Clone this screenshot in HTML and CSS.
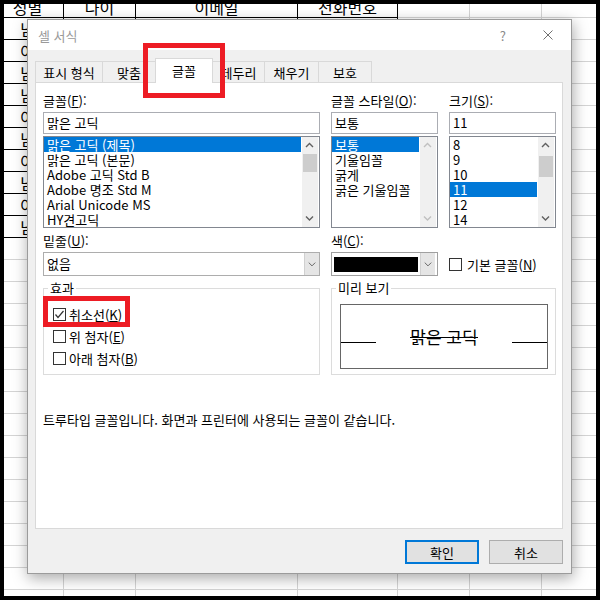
FILE: index.html
```html
<!DOCTYPE html>
<html lang="ko">
<head>
<meta charset="utf-8">
<title>셀 서식</title>
<link rel="stylesheet" href="styles.css">
</head>
<body>
<div class="frame">
  <table class="sheet">
    <colgroup><col class="c-a"><col class="c-b"><col class="c-c"><col class="c-d"></colgroup>
    <tr><td>성별</td><td>나이</td><td>이메일</td><td>전화번호</td></tr>
    <tr><td>남</td><td></td><td></td><td></td></tr>
    <tr><td>여</td><td></td><td></td><td></td></tr>
    <tr><td>남</td><td></td><td></td><td></td></tr>
    <tr><td>남</td><td></td><td></td><td></td></tr>
    <tr><td>여</td><td></td><td></td><td></td></tr>
    <tr><td>남</td><td></td><td></td><td></td></tr>
    <tr><td>여</td><td></td><td></td><td></td></tr>
    <tr><td>남</td><td></td><td></td><td></td></tr>
    <tr><td>여</td><td></td><td></td><td></td></tr>
    <tr><td>남</td><td></td><td></td><td></td></tr>
  </table>

  <div class="dialog">
    <div class="titlebar">
      <span class="title">셀 서식</span>
      <span class="help">?</span>
      <svg class="close" viewBox="0 0 10 10"><path d="M0.5 0.5 L9.5 9.5 M9.5 0.5 L0.5 9.5"/></svg>
    </div>
    <div class="dlg-body">
      <div class="tabs">
        <div class="tab">표시 형식</div>
        <div class="tab">맞춤</div>
        <div class="tab active">글꼴</div>
        <div class="tab">테두리</div>
        <div class="tab">채우기</div>
        <div class="tab">보호</div>
      </div>
      <div class="panel">
        <div class="field">
          <div class="label">글꼴(<u>F</u>):</div>
          <div class="input">맑은 고딕</div>
          <div class="list">
            <div class="items">
              <div class="item sel">맑은 고딕 (제목)</div>
              <div class="item">맑은 고딕 (본문)</div>
              <div class="item">Adobe 고딕 Std B</div>
              <div class="item">Adobe 명조 Std M</div>
              <div class="item">Arial Unicode MS</div>
              <div class="item">HY견고딕</div>
            </div>
            <div class="scroll">
              <svg class="arr" viewBox="0 0 15 17"><polyline points="4,10 7.5,6.5 11,10"/></svg>
              <span class="thumb"></span>
              <span class="track"></span>
              <svg class="arr" viewBox="0 0 15 17"><polyline points="4,6.5 7.5,10 11,6.5"/></svg>
            </div>
          </div>
        </div>

        <div class="field">
          <div class="label">글꼴 스타일(<u>O</u>):</div>
          <div class="input">보통</div>
          <div class="list">
            <div class="items">
              <div class="item sel">보통</div>
              <div class="item">기울임꼴</div>
              <div class="item">굵게</div>
              <div class="item">굵은 기울임꼴</div>
            </div>
            <div class="scroll disabled">
              <svg class="arr" viewBox="0 0 15 17"><polyline points="4,10 7.5,6.5 11,10"/></svg>
              <span class="track"></span>
              <svg class="arr" viewBox="0 0 15 17"><polyline points="4,6.5 7.5,10 11,6.5"/></svg>
            </div>
          </div>
        </div>

        <div class="field">
          <div class="label">크기(<u>S</u>):</div>
          <div class="input">11</div>
          <div class="list">
            <div class="items">
              <div class="item">8</div>
              <div class="item">9</div>
              <div class="item">10</div>
              <div class="item sel">11</div>
              <div class="item">12</div>
              <div class="item">14</div>
            </div>
            <div class="scroll">
              <svg class="arr" viewBox="0 0 15 17"><polyline points="4,10 7.5,6.5 11,10"/></svg>
              <span class="thumb thumb-size"></span>
              <span class="track"></span>
              <svg class="arr" viewBox="0 0 15 17"><polyline points="4,6.5 7.5,10 11,6.5"/></svg>
            </div>
          </div>
        </div>

        <div class="field row2">
          <div class="label">밑줄(<u>U</u>):</div>
          <div class="combo">
            <span class="combo-text">없음</span>
            <span class="combo-btn"><svg viewBox="0 0 15 22"><polyline points="4,9.5 7.5,13 11,9.5"/></svg></span>
          </div>
        </div>

        <div class="field row2">
          <div class="label">색(<u>C</u>):</div>
          <div class="combo color">
            <span class="swatch"></span>
            <span class="combo-btn"><svg viewBox="0 0 15 22"><polyline points="4,9.5 7.5,13 11,9.5"/></svg></span>
          </div>
        </div>

        <div class="check normal-font">
          <span class="box"></span>
          <span>기본 글꼴(<u>N</u>)</span>
        </div>

        <div class="group effects">
          <span class="group-title">효과</span>
          <div class="checks">
            <div class="check">
              <span class="box"><svg viewBox="0 0 11 11"><polyline points="1.5,5.5 4,8.5 9.5,2"/></svg></span>
              <span>취소선(<u>K</u>)</span>
            </div>
            <div class="check">
              <span class="box"></span>
              <span>위 첨자(<u>E</u>)</span>
            </div>
            <div class="check">
              <span class="box"></span>
              <span>아래 첨자(<u>B</u>)</span>
            </div>
          </div>
        </div>

        <div class="group preview">
          <span class="group-title">미리 보기</span>
          <div class="sample">
            <span class="baseline"></span>
            <span class="sample-text"><span class="strike">맑은 고딕</span></span>
            <span class="baseline"></span>
          </div>
        </div>

        <p class="desc">트루타입 글꼴입니다. 화면과 프린터에 사용되는 글꼴이 같습니다.</p>
      </div>
      <div class="buttons">
        <div class="btn default">확인</div>
        <div class="btn">취소</div>
      </div>
    </div>
  </div>

  <div class="mark mark-tab"></div>
  <div class="mark mark-strike"></div>
</div>
</body>
</html>
```

FILE: styles.css
```css
* { box-sizing: border-box; }
html, body { margin: 0; padding: 0; }
body {
  width: 600px;
  height: 600px;
  background: #000;
  font-family: "Noto Sans CJK KR", "Malgun Gothic", sans-serif;
  color: #000;
}

.frame {
  position: relative;
  width: 600px;
  height: 600px;
  border: 4px solid #000;
  overflow: hidden;
  background-color: #fff;
  background-image:
    linear-gradient(#d4d4d4, #d4d4d4),
    linear-gradient(#d4d4d4, #d4d4d4),
    linear-gradient(#d4d4d4, #d4d4d4),
    linear-gradient(#d4d4d4, #d4d4d4),
    linear-gradient(#d4d4d4, #d4d4d4),
    linear-gradient(#d4d4d4, #d4d4d4),
    linear-gradient(to bottom, #d4d4d4 0, #d4d4d4 1px, transparent 1px);
  background-size: 1px 100%, 1px 100%, 1px 100%, 1px 100%, 1px 100%, 1px 100%, 100% 22px;
  background-position: 59px 0, 131px 0, 293px 0, 393px 0, 465px 0, 537px 0, 0 13px;
  background-repeat: no-repeat, no-repeat, no-repeat, no-repeat, no-repeat, no-repeat, repeat-y;
}

/* spreadsheet */
.sheet {
  border-collapse: collapse;
  table-layout: fixed;
  width: 406px;
  margin: -9px 0 0 -13px;
  font-size: 16px;
}
.c-a, .c-b { width: 72px; }
.c-c { width: 162px; }
.c-d { width: 100px; }
.sheet tr { height: 22px; }
.sheet td {
  border: 1px solid #000;
  background: #fff;
  padding: 0;
  text-align: center;
  line-height: 20px;
  white-space: nowrap;
}

/* dialog */
.dialog {
  position: absolute;
  left: 23px;
  top: 15px;
  z-index: 1;
  width: 545px;
  height: 555px;
  border: 1px solid #9b9b9b;
  background: #f0f0f0;
  box-shadow: 1px 4px 14px rgba(0, 0, 0, 0.35);
  font-size: 13px;
  display: flex;
  flex-direction: column;
}
.titlebar {
  height: 30px;
  flex: none;
  background: #fff;
  display: flex;
  align-items: center;
  padding: 0 18px 0 10px;
}
.title { flex: 1; color: #9a9a9a; }
.help { color: #8a8a8a; font-size: 13px; margin-right: 37px; }
.close { width: 10px; height: 10px; stroke: #707070; stroke-width: 1; fill: none; }

.dlg-body {
  flex: 1;
  display: flex;
  flex-direction: column;
  padding: 8px 8px 9px 7px;
}

.tabs {
  display: grid;
  grid-template-columns: 68px 53px 57px 52px 54px 53px;
  align-items: end;
  height: 25px;
  margin-bottom: -1px;
}
.tab {
  height: 22px;
  border-top: 1px solid #d9d9d9;
  border-right: 1px solid #d9d9d9;
  display: flex;
  align-items: center;
  justify-content: center;
  white-space: nowrap;
  line-height: 16px;
}
.tab:first-child { border-left: 1px solid #d9d9d9; }
.tab.active {
  position: relative;
  z-index: 1;
  height: 25px;
  margin-left: -1px;
  border-left: 1px solid #d9d9d9;
  background: #fff;
  padding-bottom: 1px;
}

.panel {
  height: 447px;
  flex: none;
  background: #fff;
  border: 1px solid #d9d9d9;
  padding: 10px 6px 0 7px;
  display: grid;
  grid-template-columns: 277px 107px 107px;
  column-gap: 11px;
  align-content: start;
}

.field { display: flex; flex-direction: column; }
.label { line-height: 16px; margin-bottom: 3px; white-space: nowrap; }
.input {
  height: 22px;
  border: 1px solid #abadb3;
  padding: 0 3px;
  line-height: 20px;
  white-space: nowrap;
}
.list {
  height: 92px;
  margin-top: 2px;
  border: 1px solid #828790;
  display: flex;
}
.items { flex: 1; min-width: 0; }
.item {
  height: 15px;
  line-height: 15px;
  padding-left: 3px;
  white-space: nowrap;
}
.item.sel { background: #0078d7; color: #fff; }

.scroll {
  width: 16px;
  margin: 0 1px 0 1px;
  background: #f0f0f0;
  display: flex;
  flex-direction: column;
}
.arr {
  width: 15px;
  height: 17px;
  flex: none;
  fill: none;
  stroke: #606060;
  stroke-width: 1.4;
}
.scroll.disabled .arr { stroke: #c0c0c0; }
.thumb { height: 18px; margin: 0 1px; background: #cdcdcd; flex: none; }
.thumb-size { height: 21px; margin-top: 2px; }
.track { flex: 1; }

.row2 { margin-top: 5px; }
.combo {
  height: 24px;
  border: 1px solid #adadad;
  background: #fff;
  display: flex;
}
.combo-text { flex: 1; padding-left: 3px; line-height: 22px; }
.combo-btn {
  width: 15px;
  background: #e5e5e5;
  border-left: 1px solid #d0d0d0;
  display: flex;
}
.combo-btn svg {
  width: 15px;
  height: 22px;
  fill: none;
  stroke: #606060;
  stroke-width: 1;
}
.combo.color { padding: 4px 1px 0 2px; border-color: #a0a0a0; }
.combo.color .combo-btn { margin: -4px 0 0 2px; }
.swatch { width: 84px; height: 15px; background: #000; }

.check {
  display: flex;
  align-items: center;
  gap: 3px;
  height: 22px;
  white-space: nowrap;
}
.normal-font { align-self: end; height: 24px; gap: 5px; margin-top: 5px; }
.box {
  width: 13px;
  height: 13px;
  border: 1px solid #333;
  background: #fff;
  display: flex;
  flex: none;
}
.box svg { width: 11px; height: 11px; fill: none; stroke: #333; stroke-width: 1.2; }

.group {
  margin-top: 12px;
  border: 1px solid #dcdcdc;
}
.group-title {
  display: block;
  width: max-content;
  margin: -9px 0 0 4px;
  padding: 0 2px;
  background: #fff;
  line-height: 16px;
}
.checks { padding: 7px 0 4px 9px; }
.preview { grid-column: 2 / 4; }
.sample {
  height: 65px;
  margin: 8px 7px 5px 8px;
  border: 1px solid #666;
  display: flex;
  align-items: center;
}
.baseline { width: 35px; height: 1px; background: #000; margin-top: 11px; flex: none; }
.sample-text {
  flex: 1;
  text-align: center;
  font-size: 17px;
  line-height: 22px;
}
.strike {
  background: linear-gradient(#000, #000) 0 13px / 100% 1px no-repeat;
}

.desc {
  grid-column: 1 / -1;
  margin: 37px 0 0;
  line-height: 16px;
  white-space: nowrap;
}

.buttons {
  display: flex;
  justify-content: flex-end;
  gap: 10px;
  margin-top: 11px;
}
.btn {
  width: 74px;
  height: 24px;
  border: 1px solid #adadad;
  background: #e1e1e1;
  display: flex;
  align-items: center;
  justify-content: center;
}
.btn.default { border: 2px solid #0078d7; }

/* annotation marks */
.mark {
  position: absolute;
  z-index: 2;
  border: 5px solid #ed1c24;
}
.mark-tab { left: 139px; top: 39px; width: 82px; height: 55px; }
.mark-strike { left: 39px; top: 292px; width: 87px; height: 31px; }
```
